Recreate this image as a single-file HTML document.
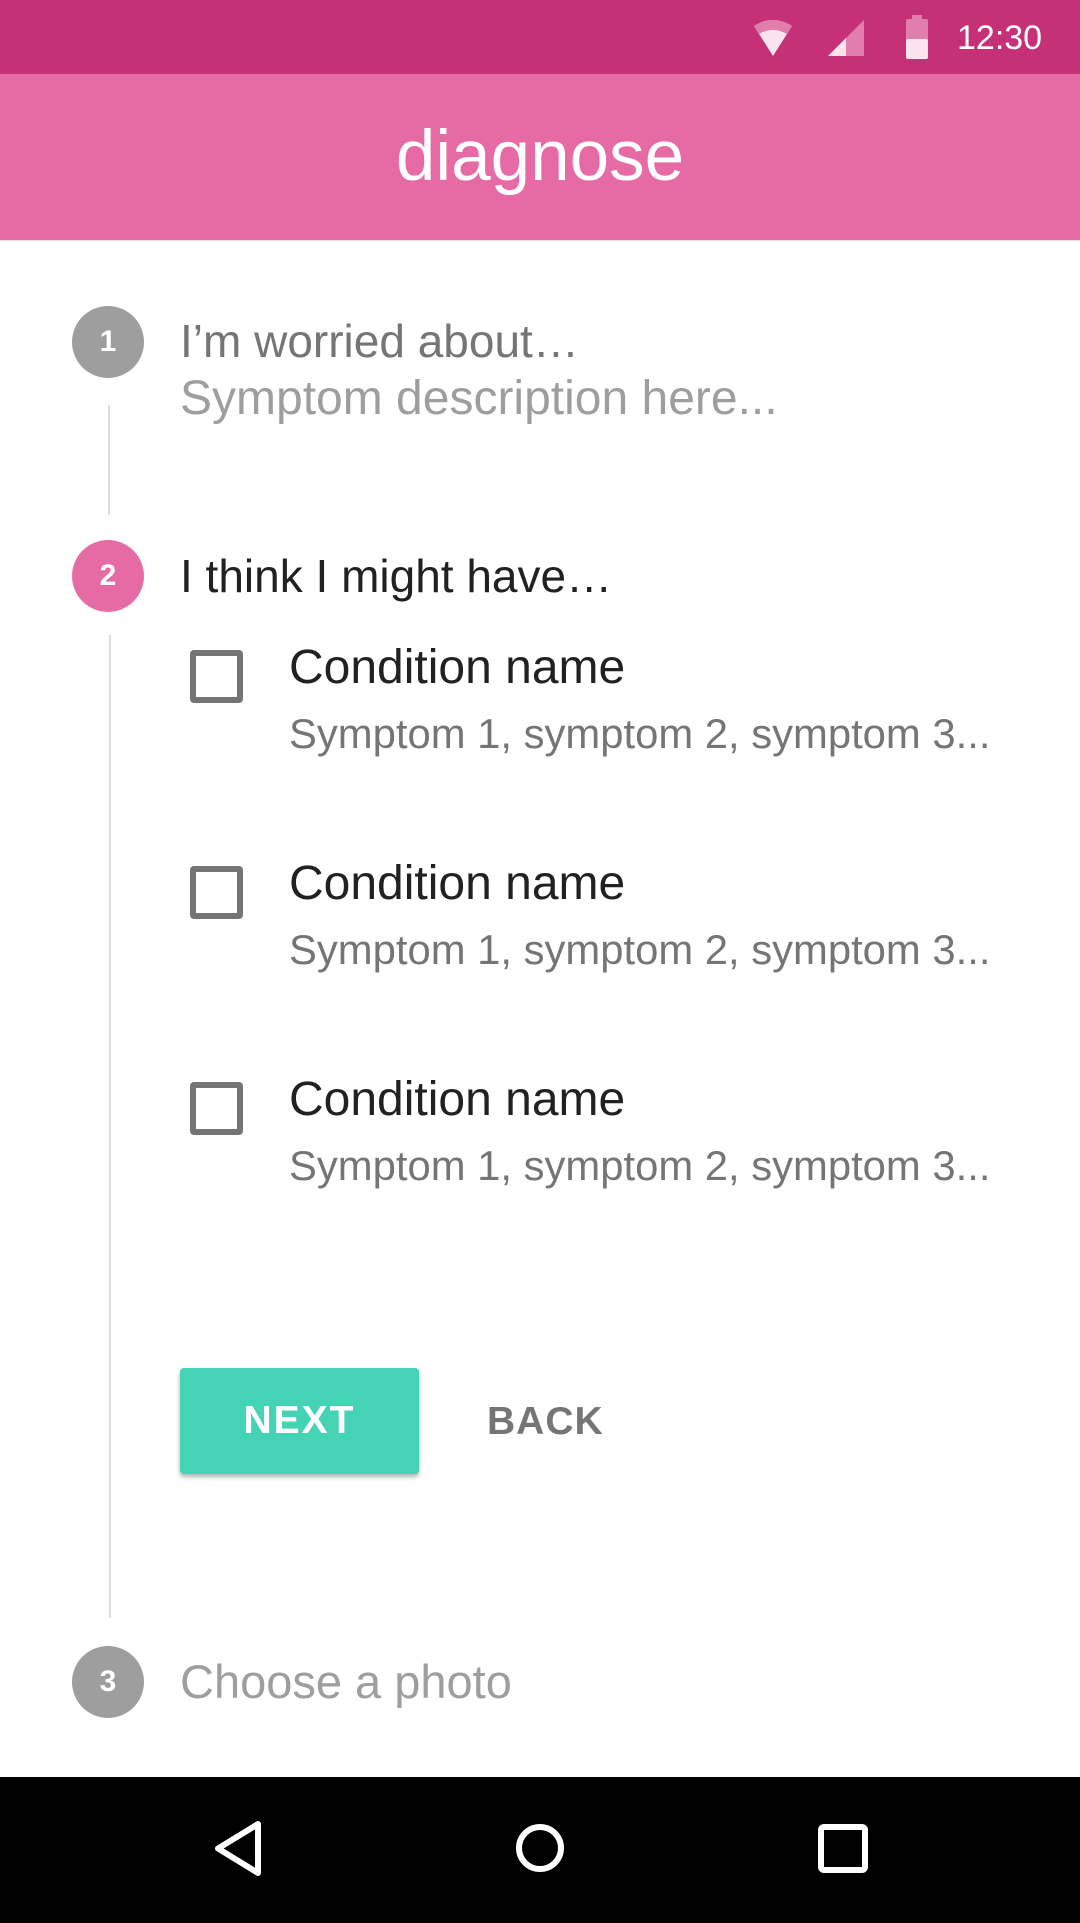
<!DOCTYPE html>
<html><head><meta charset="utf-8"><style>
*{margin:0;padding:0;box-sizing:border-box}
body{width:1080px;height:1923px;position:relative;background:#fff;font-family:"Liberation Sans",sans-serif;overflow:hidden}
.abs{position:absolute}
.t{position:absolute;white-space:nowrap;line-height:1}
.circ{position:absolute;width:72px;height:72px;border-radius:50%;color:#fff;font-weight:bold;font-size:30px;display:flex;align-items:center;justify-content:center}
.cb{position:absolute;left:190px;width:53px;height:53px;border:6px solid #757575;border-radius:4px}
</style></head><body>
<div class="abs" style="left:0;top:0;width:1080px;height:74px;background:#c53077"></div>
<svg class="abs" style="left:752px;top:18px" width="44" height="40" viewBox="0 0 44 40"><path d="M2 8 Q21 -4 40 8 L21 38 Z" fill="#fbe4ee"/><path d="M2 8 Q21 -4 40 8 L35 16 Q21 8 7 16 Z" fill="#e07fab"/></svg>
<svg class="abs" style="left:826px;top:18px" width="40" height="40" viewBox="0 0 40 40"><path d="M38 2 L38 38 L2 38 Z" fill="#e07fab"/><path d="M20 20 L20 38 L2 38 Z" fill="#fbe4ee"/></svg>
<svg class="abs" style="left:904px;top:15px" width="26" height="44" viewBox="0 0 26 44"><rect x="8" y="0" width="10" height="5" fill="#e07fab"/><rect x="2" y="4" width="22" height="40" rx="2" fill="#e07fab"/><rect x="2" y="24" width="22" height="20" rx="2" fill="#fbe4ee"/></svg>
<div class="t" style="left:957px;top:21px;font-size:34px;color:#fff">12:30</div>
<div class="abs" style="left:0;top:74px;width:1080px;height:167px;background:#e66ba5;border-bottom:1px solid #ddd"></div>
<div class="t" style="left:0;width:1080px;text-align:center;top:121px;font-size:71px;color:#fff;font-weight:300">diagnose</div>

<div class="circ" style="left:72px;top:306px;background:#9e9e9e">1</div>
<div class="t" style="left:180px;top:318px;font-size:46px;color:#757575">I’m worried about…</div>
<div class="t" style="left:180px;top:375px;font-size:48px;color:#9e9e9e">Symptom description here...</div>
<div class="abs" style="left:108px;top:405px;width:2px;height:110px;background:#ddd"></div>

<div class="circ" style="left:72px;top:540px;background:#e66ba5">2</div>
<div class="t" style="left:180px;top:553px;font-size:46px;color:#212121">I think I might have…</div>
<div class="abs" style="left:109px;top:635px;width:2px;height:983px;background:#ddd"></div>

<div class="cb" style="top:650px"></div>
<div class="t" style="left:289px;top:644px;font-size:48px;color:#212121">Condition name</div>
<div class="t" style="left:289px;top:713px;font-size:41.8px;color:#757575">Symptom 1, symptom 2, symptom 3...</div>
<div class="cb" style="top:866px"></div>
<div class="t" style="left:289px;top:860px;font-size:48px;color:#212121">Condition name</div>
<div class="t" style="left:289px;top:929px;font-size:41.8px;color:#757575">Symptom 1, symptom 2, symptom 3...</div>
<div class="cb" style="top:1082px"></div>
<div class="t" style="left:289px;top:1076px;font-size:48px;color:#212121">Condition name</div>
<div class="t" style="left:289px;top:1145px;font-size:41.8px;color:#757575">Symptom 1, symptom 2, symptom 3...</div>

<div class="abs" style="left:180px;top:1368px;width:239px;height:106px;background:#45d3b6;border-radius:4px;box-shadow:0 3px 5px rgba(0,0,0,.3);display:flex;align-items:center;justify-content:center;color:#fff;font-size:39px;font-weight:bold;letter-spacing:2px">NEXT</div>
<div class="t" style="left:487px;top:1402px;font-size:39px;color:#757575;font-weight:bold;letter-spacing:1px">BACK</div>

<div class="circ" style="left:72px;top:1646px;background:#9e9e9e">3</div>
<div class="t" style="left:180px;top:1658px;font-size:47px;color:#9e9e9e">Choose a photo</div>

<div class="abs" style="left:0;top:1777px;width:1080px;height:146px;background:#000"></div>
<svg class="abs" style="left:0;top:1777px" width="1080" height="146" viewBox="0 0 1080 146">
<path d="M258 47 L258 96 L218 71.5 Z" fill="none" stroke="#fff" stroke-width="6" stroke-linejoin="round"/>
<circle cx="540" cy="71" r="21" fill="none" stroke="#fff" stroke-width="6"/>
<rect x="821" y="50" width="44" height="43" rx="3" fill="none" stroke="#fff" stroke-width="6"/>
</svg>
</body></html>
